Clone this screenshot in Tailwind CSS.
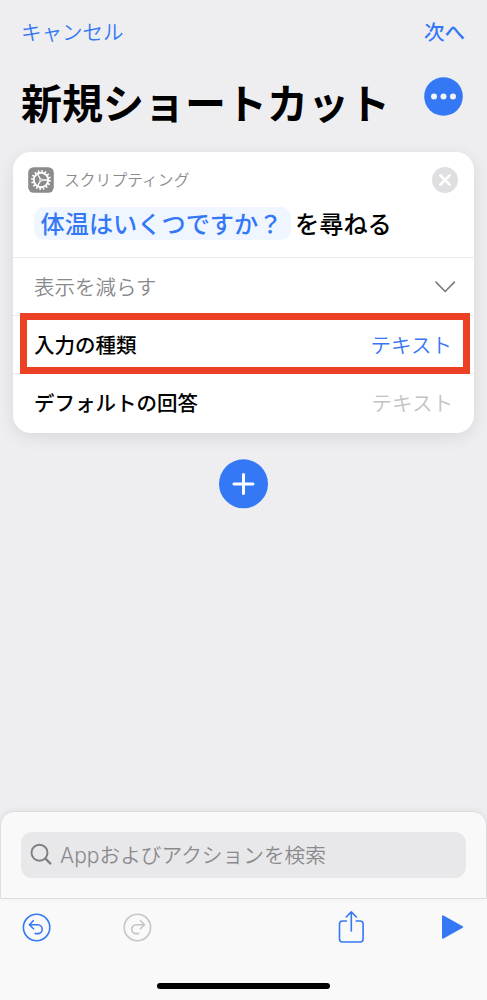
<!DOCTYPE html>
<html lang="ja">
<head>
<meta charset="utf-8">
<title>新規ショートカット</title>
<script src="https://cdn.jsdelivr.net/npm/@tailwindcss/browser@4"></script>
</head>
<body class="flex h-[1000px] w-[487px] flex-col overflow-hidden bg-[#eeeef1] font-['Noto_Sans_CJK_JP',sans-serif] text-[20.5px] leading-none text-black">
  <header>
    <div class="flex h-16 items-center justify-between pr-[22px] pb-[2px] pl-[21px] text-[#3478f6]">
      <span class="font-[350] whitespace-nowrap">キャンセル</span>
      <span class="font-medium whitespace-nowrap">次へ</span>
    </div>
    <div class="flex h-[88px] items-start justify-between pr-6 pl-[21px]">
      <h1 class="pt-[17px] text-[41px] leading-none font-bold whitespace-nowrap">新規ショートカット</h1>
      <svg class="mt-[13px] h-[39px] w-[39px]" viewBox="0 0 39 39"><circle cx="19.5" cy="19.5" r="19.3" fill="#3478f6"/><g fill="#f3f4f8"><circle cx="10" cy="19.5" r="3"/><circle cx="19.5" cy="19.5" r="3"/><circle cx="29" cy="19.5" r="3"/></g></svg>
    </div>
  </header>

  <main class="flex flex-1 flex-col">
    <section class="relative mx-[13px] h-[281px] rounded-[18px] bg-white shadow-[0_4px_18px_rgba(0,0,0,0.09)]">
      <div class="h-[106px] border-b border-[#ececee] pt-[15px]">
        <div class="flex h-[26px] items-center pr-4 pl-[15px]">
          <svg class="h-[26px] w-[26px]" viewBox="0 0 26 26" fill="none" stroke="#fff"><rect x=".2" y=".2" width="25.6" height="25.6" rx="5.5" fill="#8b8b8e" stroke="none"/><circle cx="13" cy="13" r="8.8" stroke-width="2.2" stroke-dasharray="1.6 1.8557"/><circle cx="13" cy="13" r="7.2" stroke-width="1.9"/><path d="M13 13h7M13 13l-3.5-6M13 13l-3.5 6" stroke-width="1.4"/><circle cx="13" cy="13" r="1.2" fill="#8b8b8e" stroke-width=".9"/></svg>
          <span class="ml-[10px] flex-1 text-[15.8px] font-[350] whitespace-nowrap text-[#8a8a8d]">スクリプティング</span>
          <svg class="h-[26px] w-[26px]" viewBox="0 0 26 26"><circle cx="13" cy="13" r="13" fill="#dfdfe1"/><path d="M8.4 8.4l9.2 9.2M17.6 8.4l-9.2 9.2" stroke="#fff" stroke-width="2.7" stroke-linecap="round"/></svg>
        </div>
        <div class="mt-[14px] flex h-[33px] items-center pl-[21px] text-[24.2px] font-medium whitespace-nowrap">
          <span class="flex h-[33px] w-[257px] items-center rounded-[10px] bg-[#eff6ff] pl-[6.5px] text-[#3478f6]">体温はいくつですか？</span>
          <span class="ml-[4px]">を尋ねる</span>
        </div>
      </div>
      <div class="flex h-[58px] items-center justify-between border-b border-[#ececee] pr-[18px] pl-[21px]">
        <span class="font-[350] text-[#8a8a8d]">表示を減らす</span>
        <svg class="h-[14px] w-[22px]" viewBox="0 0 22 14" fill="none" stroke="#7d7d80" stroke-width="1.7" stroke-linecap="round" stroke-linejoin="round"><path d="M2 2.2l9.2 9.3 9.2-9.3"/></svg>
      </div>
      <div class="flex h-[58px] items-center justify-between border-b border-[#ececee] pr-[22px] pb-px pl-[21px]">
        <span class="font-medium">入力の種類</span>
        <span class="font-[350] text-[#3478f6]">テキスト</span>
      </div>
      <div class="flex h-[58px] items-center justify-between pr-[21px] pb-[2px] pl-[21px]">
        <span class="font-medium">デフォルトの回答</span>
        <span class="font-[350] text-[#c2c2c5]">テキスト</span>
      </div>
      <div class="absolute top-[160.5px] left-[6.5px] h-[61px] w-[450px] border-[7px] border-[#ec4125]"></div>
    </section>
    <svg class="mt-[26px] h-[50px] w-[50px] self-center" viewBox="0 0 50 50"><circle cx="24.5" cy="24.8" r="24.5" fill="#3478f6"/><path d="M24.5 15.6v19M15 25.1h19" stroke="#fff" stroke-width="3" stroke-linecap="round"/></svg>
  </main>

  <footer class="h-[189px] bg-[#f9f9fa]">
    <div class="h-[88px] bg-[#eeeef1]">
      <div class="h-full rounded-t-[14px] border border-[#dedee1] bg-[#f9f9fa] px-5 pt-5 shadow-[0_-1px_6px_rgba(0,0,0,0.05)]">
        <div class="flex h-[46px] items-center rounded-[11px] bg-[#e8e8ea] pl-[9px] text-[#8a8a8d]">
          <svg class="h-6 w-6" viewBox="0 0 24 24" fill="none" stroke="#7f7f83" stroke-width="1.9" stroke-linecap="round"><circle cx="9.5" cy="9.7" r="8"/><path d="M15.5 15.7l4.8 4.8" stroke-width="2.4"/></svg>
          <span class="ml-[6px] pb-px text-[20.7px] font-[350] whitespace-nowrap"><span class="font-['Inter'] text-[21px] font-light">App</span>およびアクションを検索</span>
        </div>
      </div>
    </div>
    <div class="flex h-[58px] items-center pl-[22px]">
      <svg class="h-[30px] w-[30px]" viewBox="0 0 30 30" fill="none" stroke="#3478f6" stroke-width="1.6" stroke-linecap="round" stroke-linejoin="round"><circle cx="14.6" cy="14.5" r="13.2"/><path d="M11.3 7.7L7.4 11.8l4.1 4M7.8 11.8h8a4.4 4.4 0 0 1 4.4 4.4 4.4 4.4 0 0 1-4.4 4.4h-2.6"/></svg>
      <svg class="ml-[71px] h-[30px] w-[30px]" viewBox="0 0 30 30" fill="none" stroke="#c6c6c8" stroke-width="1.6" stroke-linecap="round" stroke-linejoin="round"><circle cx="14.4" cy="14.5" r="13.2"/><path d="M17.6 7.7l3.9 4.1-4.1 4M21.1 11.8h-8a4.4 4.4 0 0 0-4.4 4.4 4.4 4.4 0 0 0 4.4 4.4h2.6"/></svg>
      <svg class="mb-[2px] ml-[185px] h-[34px] w-[26px]" viewBox="0 0 26 34" fill="none" stroke="#3478f6" stroke-width="1.6" stroke-linecap="round" stroke-linejoin="round"><path d="M8.4 11H4.5a3 3 0 0 0-3 3v15a3 3 0 0 0 3 3h17.6a3 3 0 0 0 3-3V14a3 3 0 0 0-3-3h-3.9M13.3 21V2.2M8.2 7l5.1-5.1L18.4 7"/></svg>
      <svg class="mb-[2px] ml-[77px] h-[26px] w-6" viewBox="0 0 24 26"><path d="M2 2.3v21.4L21.2 13z" fill="#3478f6" stroke="#3478f6" stroke-width="2" stroke-linejoin="round"/></svg>
    </div>
    <div class="mx-auto mt-[26px] h-[6px] w-[173px] rounded-full bg-black"></div>
  </footer>
</body>
</html>
